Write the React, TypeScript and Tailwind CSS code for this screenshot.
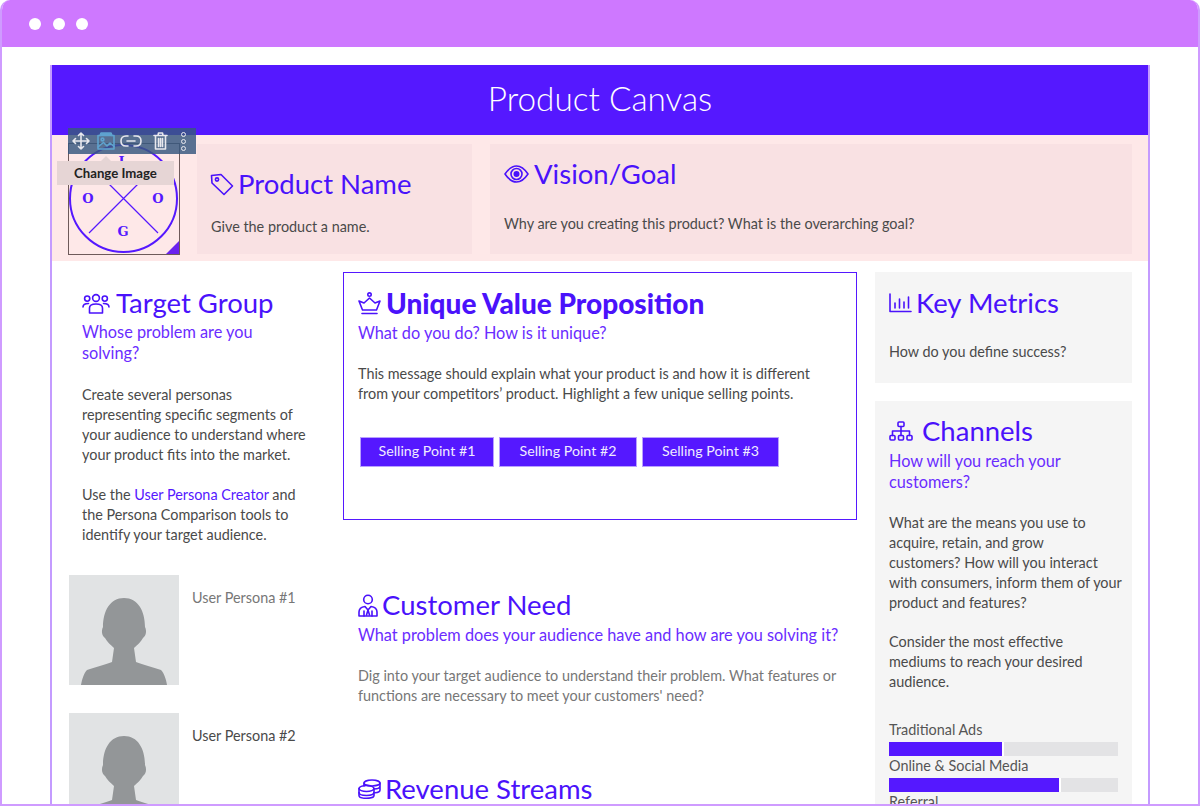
import React from 'react';

const Ico: React.FC<{ w: number; h: number; vb: string; className?: string; children: React.ReactNode }> = ({ w, h, vb, className, children }) => (
    <svg width={w} height={h} viewBox={vb} fill="none" stroke="currentColor" strokeWidth="1.6" strokeLinecap="round" strokeLinejoin="round" className={`shrink-0 ${className ?? ''}`}>
        {children}
    </svg>
);

const TagIcon = () => (
    <Ico w={24} h={24} vb="0 0 24 24" className="-ml-px">
        <path d="M1.5 3.5 L2 11 L14 22.5 L22.5 14 L11 2.5 Z" />
        <circle cx="7" cy="7.5" r="1.6" />
    </Ico>
);
const EyeIcon = () => (
    <Ico w={25} h={18} vb="0 0 25 18">
        <path d="M1 9 C5 3 9 1 12.5 1 C16 1 20 3 24 9 C20 15 16 17 12.5 17 C9 17 5 15 1 9 Z" />
        <circle cx="12.5" cy="9" r="5.5" />
        <circle cx="12.5" cy="9" r="2.2" fill="currentColor" />
    </Ico>
);
const UsersIcon = () => (
    <Ico w={28} h={21} vb="0 0 28 21">
        <circle cx="14" cy="5" r="3.4" />
        <circle cx="5.2" cy="5.6" r="2.6" />
        <circle cx="22.8" cy="5.6" r="2.6" />
        <path d="M7.5 20 V15 C7.5 12.5 10 11 14 11 C18 11 20.5 12.5 20.5 15 V20 Z" />
        <path d="M1 14 C1 11.5 3 10.5 6.5 10.5 M27 14 C27 11.5 25 10.5 21.5 10.5" />
    </Ico>
);
const CrownIcon = () => (
    <Ico w={23} h={23} vb="0 0 23 23">
        <circle cx="11.5" cy="2.6" r="1.7" />
        <path d="M1 9 L6 11 L11.5 6 L17 11 L22 9 L18.5 18 H4.5 Z" />
        <path d="M4 21.5 H19" />
    </Ico>
);
const PersonIcon = () => (
    <Ico w={20} h={23} vb="0 0 20 23">
        <circle cx="10" cy="5.5" r="4.3" />
        <path d="M1 22 V18 C1 15 3.5 13 7 12.5 L10 16 L13 12.5 C16.5 13 19 15 19 18 V22 Z" />
        <path d="M10 16 L8.5 21 M10 16 L11.5 21 M6 17 V22 M14 17 V22" />
    </Ico>
);
const CoinsIcon = () => (
    <Ico w={23} h={20} vb="0 0 23 20">
        <ellipse cx="14" cy="4" rx="8" ry="3" />
        <path d="M6 4 V7 M22 4 V7 C22 9 19 10 16 10 M22 7 V11 C22 12.5 20 13.5 17 13.7" />
        <ellipse cx="8.5" cy="9.5" rx="7.5" ry="3" />
        <path d="M1 9.5 V13.5 C1 15.2 4.3 16.5 8.5 16.5 C12.7 16.5 16 15.2 16 13.5 V9.5" />
        <path d="M1 13.5 V16.5 C1 18.2 4.3 19.3 8.5 19.3 C12.7 19.3 16 18.2 16 16.5 V13.5" />
    </Ico>
);
const ChartIcon = () => (
    <Ico w={23} h={20} vb="0 0 23 20">
        <path d="M1 1 V18.5 H22" />
        <path d="M6 15 V10 M10.5 15 V6 M15 15 V9 M19.5 15 V4" />
    </Ico>
);
const OrgIcon = () => (
    <Ico w={24} h={20} vb="0 0 24 20">
        <rect x="9" y="1" width="6" height="4.5" rx="1" />
        <rect x="1" y="14.5" width="5" height="4.5" rx="1" />
        <rect x="9.5" y="14.5" width="5" height="4.5" rx="1" />
        <rect x="18" y="14.5" width="5" height="4.5" rx="1" />
        <path d="M12 5.5 V14.5 M3.5 14.5 V10 H20.5 V14.5" />
    </Ico>
);

const Silhouette = () => (
    <svg width="110" height="110" viewBox="0 0 110 110" className="bg-[#e1e3e4] shrink-0 ml-px">
        <path
            fill="#939698"
            d="M55 23 C41 23 34 36 34 52 C32 56 33 61 36 63 C38 67 42 70 45 73 L43 87 C36 90 26 92 18 95 C15 98 13 104 12 110 H98 C97 104 95 98 92 95 C84 92 74 90 67 87 L65 73 C68 70 72 67 74 63 C77 61 78 56 76 52 C76 36 69 23 55 23 Z"
        />
    </svg>
);

const Logo = () => (
    <div className="relative w-[112px] h-[112px] -mt-px border border-[#6e5a5a] overflow-hidden shrink-0">
        <svg width="110" height="110" viewBox="0 0 110 110" className="text-[#5518ff]">
            <circle cx="54.5" cy="54.5" r="53.5" fill="none" stroke="currentColor" strokeWidth="2" />
            <path d="M20 89 L89 20 M20 20 L89 89" stroke="currentColor" strokeWidth="1.2" />
            <g fill="currentColor" fontFamily="'DejaVu Serif', serif" fontWeight="700" fontSize="13" textAnchor="middle">
                <text x="54" y="22">L</text>
                <text x="19" y="59">O</text>
                <text x="89" y="59">O</text>
                <text x="54" y="92">G</text>
            </g>
        </svg>
        <svg width="13" height="13" viewBox="0 0 13 13" className="absolute right-0 bottom-0">
            <path d="M13 0 V13 H0 Z" fill="#6a22ee" />
        </svg>
    </div>
);

const Toolbar = () => (
    <div className="absolute left-0 top-[-16px] w-[128px] h-[26px] bg-[rgba(55,88,128,0.83)] flex items-center pl-[4px] text-[#e8e8ee]">
        <Ico w={18} h={18} vb="0 0 18 18">
            <path d="M9 1 V17 M1 9 H17 M9 1 L6.5 3.5 M9 1 L11.5 3.5 M9 17 L6.5 14.5 M9 17 L11.5 14.5 M1 9 L3.5 6.5 M1 9 L3.5 11.5 M17 9 L14.5 6.5 M17 9 L14.5 11.5" />
        </Ico>
        <Ico w={18} h={18} vb="0 0 18 18" className="ml-[7px] text-[#5fa3cf]">
            <path d="M3 3.5 L4 1 H14 L15 3.5" fill="currentColor" />
            <rect x="1" y="3.5" width="16" height="13.5" />
            <circle cx="5.5" cy="7.5" r="1.4" />
            <path d="M1 15 L6.5 10.5 L10 14 L13 11 L17 14.5" />
        </Ico>
        <Ico w={22} h={12} vb="0 0 22 12" className="ml-[5px]">
            <path d="M8 1 H6 C3 1 1 3 1 6 C1 9 3 11 6 11 H8 M14 1 H16 C19 1 21 3 21 6 C21 9 19 11 16 11 H14 M7 6 H15" />
        </Ico>
        <Ico w={15} h={18} vb="0 0 15 18" className="ml-[11px]">
            <path d="M1 3.5 H14 M5 3.5 L5.5 1 H9.5 L10 3.5 M2.5 3.5 V17 H12.5 V3.5 M5.5 6.5 V14.5 M7.5 6.5 V14.5 M9.5 6.5 V14.5" />
        </Ico>
        <div className="ml-[13px] flex flex-col gap-[2px]">
            <div className="w-[5px] h-[5px] rounded-full border border-[#e8e8ee]" />
            <div className="w-[5px] h-[5px] rounded-full border border-[#e8e8ee]" />
            <div className="w-[5px] h-[5px] rounded-full border border-[#e8e8ee]" />
        </div>
    </div>
);

const ChangeImageTip = () => (
    <div className="absolute left-[-11px] top-[17px] w-[117px] h-[24px] pb-px bg-[#e6d5d5] text-[#222] text-[13.2px] font-bold flex items-center justify-center">
        <div className="absolute left-[44px] top-[-5px] w-0 h-0 border-x-[5px] border-b-[5px] border-x-transparent border-b-[#e6d5d5]" />
        Change Image
    </div>
);

const Heading: React.FC<{ icon: React.ReactNode; text: string; bold?: boolean; gap?: string }> = ({ icon, text, bold, gap }) => (
    <div className={`flex items-center ${gap ?? 'gap-[4px]'} h-[36px] text-[#4a12fb]`}>
        {icon}
        <h2 className={`leading-[36px] whitespace-nowrap ${bold ? 'text-[28px] font-black' : 'text-[27.5px] font-normal'}`}>{text}</h2>
    </div>
);

const Sub: React.FC<{ children: React.ReactNode }> = ({ children }) => (
    <p className="text-[16.3px] leading-[21px] text-[#6a2cff]">{children}</p>
);

const Bar: React.FC<{ label: string; pct: number }> = ({ label, pct }) => (
    <div>
        <div className="h-[22px] leading-[20px] text-[#555]">{label}</div>
        <div className="h-[14px] bg-[#e3e3e5]">
            <div className="h-full bg-[#5518ff] border-r-2 border-white" style={{ width: `${pct}%` }} />
        </div>
    </div>
);

const SellingPoint: React.FC<{ width: string; text: string }> = ({ width, text }) => (
    <div className={`${width} h-[30px] pb-[2px] bg-[#5518ff] border border-[#b9a0ff] flex items-center justify-center`}>{text}</div>
);

export default function App() {
    return (
        <div className="relative h-[806px] w-[1200px] overflow-hidden bg-white font-['Lato',sans-serif] text-[14.4px] leading-[20px] text-[#4a4a4a]">
            <div className="h-full flex flex-col rounded-t-[10px] border-x-2 border-b-2 border-[#cf9bff] overflow-hidden">
                <div className="h-[47px] shrink-0 bg-[#ce78ff] flex items-center gap-[11.5px] pl-[29px] -mx-[2px]">
                    <div className="w-[12px] h-[12px] rounded-full bg-white" />
                    <div className="w-[12px] h-[12px] rounded-full bg-white" />
                    <div className="w-[12px] h-[12px] rounded-full bg-white" />
                </div>

                <div className="mt-[18px] mx-[48px] flex-1 min-h-0 border-x-2 border-[#c49bff] overflow-hidden">
                    <div className="-mx-[2px] h-[70px] pb-[4px] bg-[#5518ff] flex items-center justify-center text-white text-[33.3px] font-light">
                        Product Canvas
                    </div>

                    <div className="h-[126px] bg-[#fee8e8] flex gap-[17px] pl-[16px] pr-[16px] pt-[9px]">
                        <div className="relative w-[112px] h-[112px] shrink-0">
                            <Logo />
                            <Toolbar />
                            <ChangeImageTip />
                        </div>
                        <div className="w-[275px] h-[110px] bg-[#f9e1e3] pl-[14px] pt-[22px]">
                            <Heading icon={<TagIcon />} text="Product Name" />
                            <p className="mt-[15px]">Give the product a name.</p>
                        </div>
                        <div className="flex-1 h-[110px] bg-[#f9e1e3] pl-[14px] pt-[12px] ml-px">
                            <Heading icon={<EyeIcon />} text="Vision/Goal" gap="gap-[5px]" />
                            <p className="mt-[22px]">Why are you creating this product? What is the overarching goal?</p>
                        </div>
                    </div>

                    <div className="flex gap-[18px] pl-[16px] pr-[16px] pt-[11px]">
                        <div className="w-[257px] shrink-0">
                            <div className="pl-[14px] pr-[10px] pt-[13px]">
                                <Heading icon={<UsersIcon />} text="Target Group" gap="gap-[6px]" />
                                <Sub>
                                    Whose problem are you
                                    <br />
                                    solving?
                                </Sub>
                                <p className="mt-[22px]">
                                    Create several personas representing specific segments of your audience to understand where your product fits into the market.
                                </p>
                                <p className="mt-[20px]">
                                    Use the <span className="text-[#5518ff]">User Persona Creator</span> and the Persona Comparison tools to identify your target audience.
                                </p>
                            </div>
                            <div className="mt-[30px] flex gap-[13px]">
                                <Silhouette />
                                <span className="mt-[13px] text-[#777]">User Persona #1</span>
                            </div>
                            <div className="mt-[28px] flex gap-[13px]">
                                <Silhouette />
                                <span className="mt-[13px]">User Persona #2</span>
                            </div>
                        </div>

                        <div className="w-[514px] shrink-0">
                            <div className="h-[248px] border border-[#5518ff] px-[14px] pt-[12px]">
                                <Heading icon={<CrownIcon />} text="Unique Value Proposition" bold gap="gap-[5px]" />
                                <div className="mt-[1px]">
                                    <Sub>What do you do? How is it unique?</Sub>
                                </div>
                                <p className="mt-[21px]">
                                    This message should explain what your product is and how it is different
                                    <br />
                                    from your competitors’ product. Highlight a few unique selling points.
                                </p>
                                <div className="mt-[33px] ml-[2px] flex gap-[5px] text-[#f0ebff] text-[14.2px]">
                                    <SellingPoint width="w-[134px]" text="Selling Point #1" />
                                    <SellingPoint width="w-[138px]" text="Selling Point #2" />
                                    <SellingPoint width="w-[137px]" text="Selling Point #3" />
                                </div>
                            </div>
                            <div className="mt-[67px] pl-[15px]">
                                <Heading icon={<PersonIcon />} text="Customer Need" />
                                <div className="mt-[1px]">
                                    <Sub>What problem does your audience have and how are you solving it?</Sub>
                                </div>
                                <p className="mt-[21px] text-[#777]">
                                    Dig into your target audience to understand their problem. What features or
                                    <br />
                                    functions are necessary to meet your customers' need?
                                </p>
                                <div className="mt-[65px]">
                                    <Heading icon={<CoinsIcon />} text="Revenue Streams" />
                                </div>
                            </div>
                        </div>

                        <div className="w-[257px] shrink-0">
                            <div className="h-[111px] bg-[#f5f5f5] px-[14px] pt-[13px]">
                                <Heading icon={<ChartIcon />} text="Key Metrics" />
                                <p className="mt-[21px]">How do you define success?</p>
                            </div>
                            <div className="mt-[18px] bg-[#f5f5f5] px-[14px] pt-[12px] h-[420px]">
                                <Heading icon={<OrgIcon />} text="Channels" gap="gap-[9px]" />
                                <div className="mt-[1px]">
                                    <Sub>How will you reach your customers?</Sub>
                                </div>
                                <p className="mt-[21px] whitespace-nowrap">
                                    What are the means you use to
                                    <br />
                                    acquire, retain, and grow
                                    <br />
                                    customers? How will you interact
                                    <br />
                                    with consumers, inform them of your
                                    <br />
                                    product and features?
                                </p>
                                <p className="mt-[19px]">
                                    Consider the most effective mediums to reach your desired audience.
                                </p>
                                <div className="mt-[28px]">
                                    <Bar label="Traditional Ads" pct={50} />
                                    <Bar label="Online & Social Media" pct={75} />
                                    <div className="h-[22px] leading-[20px] text-[#555]">Referral</div>
                                </div>
                            </div>
                        </div>
                    </div>
                </div>
            </div>
        </div>
    );
}
